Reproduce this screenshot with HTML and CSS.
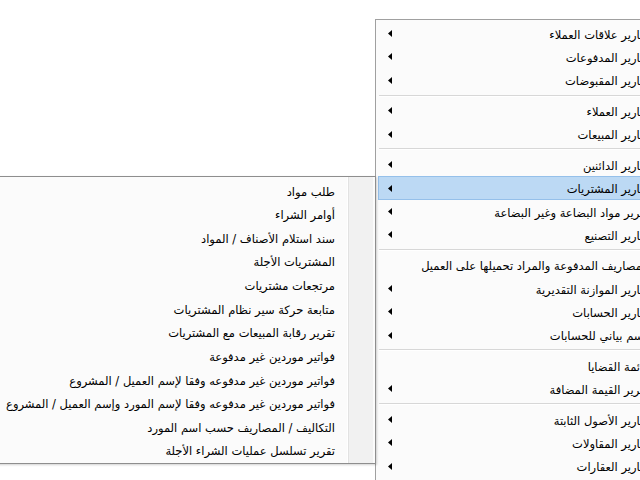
FILE: index.html
```html
<!DOCTYPE html>
<html lang="ar">
<head>
<meta charset="utf-8">
<link rel="stylesheet" href="styles.css">
</head>
<body>
<div class="menu main" dir="rtl">
  <div class="item"><span class="label">تقارير علاقات العملاء</span><svg class="arrow" width="4" height="7" viewBox="0 0 4 7"><polygon points="4,0 4,7 0,3.5"/></svg></div>
  <div class="item"><span class="label">تقارير المدفوعات</span><svg class="arrow" width="4" height="7" viewBox="0 0 4 7"><polygon points="4,0 4,7 0,3.5"/></svg></div>
  <div class="item"><span class="label">تقارير المقبوضات</span><svg class="arrow" width="4" height="7" viewBox="0 0 4 7"><polygon points="4,0 4,7 0,3.5"/></svg></div>
  <div class="sep"></div>
  <div class="item"><span class="label">تقارير العملاء</span><svg class="arrow" width="4" height="7" viewBox="0 0 4 7"><polygon points="4,0 4,7 0,3.5"/></svg></div>
  <div class="item"><span class="label">تقارير المبيعات</span><svg class="arrow" width="4" height="7" viewBox="0 0 4 7"><polygon points="4,0 4,7 0,3.5"/></svg></div>
  <div class="sep"></div>
  <div class="item"><span class="label">تقارير الدائنين</span><svg class="arrow" width="4" height="7" viewBox="0 0 4 7"><polygon points="4,0 4,7 0,3.5"/></svg></div>
  <div class="item active"><span class="label">تقارير المشتريات</span><svg class="arrow" width="4" height="7" viewBox="0 0 4 7"><polygon points="4,0 4,7 0,3.5"/></svg></div>
  <div class="item"><span class="label">تقرير مواد البضاعة وغير البضاعة</span><svg class="arrow" width="4" height="7" viewBox="0 0 4 7"><polygon points="4,0 4,7 0,3.5"/></svg></div>
  <div class="item"><span class="label">تقارير التصنيع</span><svg class="arrow" width="4" height="7" viewBox="0 0 4 7"><polygon points="4,0 4,7 0,3.5"/></svg></div>
  <div class="sep"></div>
  <div class="item"><span class="label">المصاريف المدفوعة والمراد تحميلها على العميل</span></div>
  <div class="item"><span class="label">تقارير الموازنة التقديرية</span><svg class="arrow" width="4" height="7" viewBox="0 0 4 7"><polygon points="4,0 4,7 0,3.5"/></svg></div>
  <div class="item"><span class="label">تقارير الحسابات</span><svg class="arrow" width="4" height="7" viewBox="0 0 4 7"><polygon points="4,0 4,7 0,3.5"/></svg></div>
  <div class="item"><span class="label">رسم بياني للحسابات</span><svg class="arrow" width="4" height="7" viewBox="0 0 4 7"><polygon points="4,0 4,7 0,3.5"/></svg></div>
  <div class="sep"></div>
  <div class="item"><span class="label">قائمة القضايا</span></div>
  <div class="item"><span class="label">تقرير القيمة المضافة</span><svg class="arrow" width="4" height="7" viewBox="0 0 4 7"><polygon points="4,0 4,7 0,3.5"/></svg></div>
  <div class="sep"></div>
  <div class="item"><span class="label">تقارير الأصول الثابتة</span><svg class="arrow" width="4" height="7" viewBox="0 0 4 7"><polygon points="4,0 4,7 0,3.5"/></svg></div>
  <div class="item"><span class="label">تقارير المقاولات</span><svg class="arrow" width="4" height="7" viewBox="0 0 4 7"><polygon points="4,0 4,7 0,3.5"/></svg></div>
  <div class="item"><span class="label">تقارير العقارات</span><svg class="arrow" width="4" height="7" viewBox="0 0 4 7"><polygon points="4,0 4,7 0,3.5"/></svg></div>
</div>
<div class="menu sub" dir="rtl">
  <div class="item"><span class="label">طلب مواد</span></div>
  <div class="item"><span class="label">أوامر الشراء</span></div>
  <div class="item"><span class="label">سند استلام الأصناف / المواد</span></div>
  <div class="item"><span class="label">المشتريات الأجلة</span></div>
  <div class="item"><span class="label">مرتجعات مشتريات</span></div>
  <div class="item"><span class="label">متابعة حركة سير نظام المشتريات</span></div>
  <div class="item"><span class="label">تقرير رقابة المبيعات مع المشتريات</span></div>
  <div class="item"><span class="label">فواتير موردين غير مدفوعة</span></div>
  <div class="item"><span class="label">فواتير موردين غير مدفوعه وفقا لإسم العميل / المشروع</span></div>
  <div class="item"><span class="label">فواتير موردين غير مدفوعه وفقا لإسم المورد وإسم العميل / المشروع</span></div>
  <div class="item"><span class="label">التكاليف / المصاريف حسب اسم المورد</span></div>
  <div class="item"><span class="label">تقرير تسلسل عمليات الشراء الأجلة</span></div>
</div>
</body>
</html>
```
FILE: styles.css
```css
html, body {
  margin: 0;
  padding: 0;
  width: 640px;
  height: 480px;
  overflow: hidden;
  background: #ffffff;
  position: relative;
  font-family: "DejaVu Sans", sans-serif;
  font-size: 11.5px;
  color: #000;
}

.menu {
  position: absolute;
  box-sizing: border-box;
  border: 1px solid #a0a0a0;
  padding: 2px;
  display: flex;
  flex-direction: column;
  background:
    linear-gradient(to left, transparent 0 2px, #f1f1f1 2px 26px, #e2e2e2 26px 27px, #ffffff 27px 28px, transparent 28px),
    #fbfbfb;
}

.main {
  left: 375px;
  top: 19px;
  width: 315px;
  height: 490px;
  z-index: 1;
}

.sub {
  right: 264px;
  left: -40px;
  top: 176px;
  height: 288px;
  z-index: 2;
  border-color: #8e8e8e;
  box-shadow: 1px 1px 2px rgba(0, 0, 0, 0.18);
}

.item {
  display: flex;
  align-items: center;
  justify-content: space-between;
  height: 23.3px;
  padding-right: 38px;
  padding-left: 10px;
  box-sizing: border-box;
  white-space: nowrap;
  flex: none;
}

.sub .item {
  height: 23.64px;
}

.item.active {
  background: #bcd9f4;
  box-shadow: inset 0 0 0 1px #95c0ea;
}

.label {
  line-height: 1;
  padding-top: 3px;
}

.main .label {
  padding-top: 4px;
}

.arrow {
  display: block;
  fill: #000;
  flex: none;
}

.sep {
  flex: none;
  height: 7.3px;
  margin-left: 1px;
  display: flex;
  align-items: center;
}

.sep::before {
  content: "";
  display: block;
  width: 100%;
  height: 1px;
  background: #d7d7d7;
  border-bottom: 1px solid #ffffff;
}
```
